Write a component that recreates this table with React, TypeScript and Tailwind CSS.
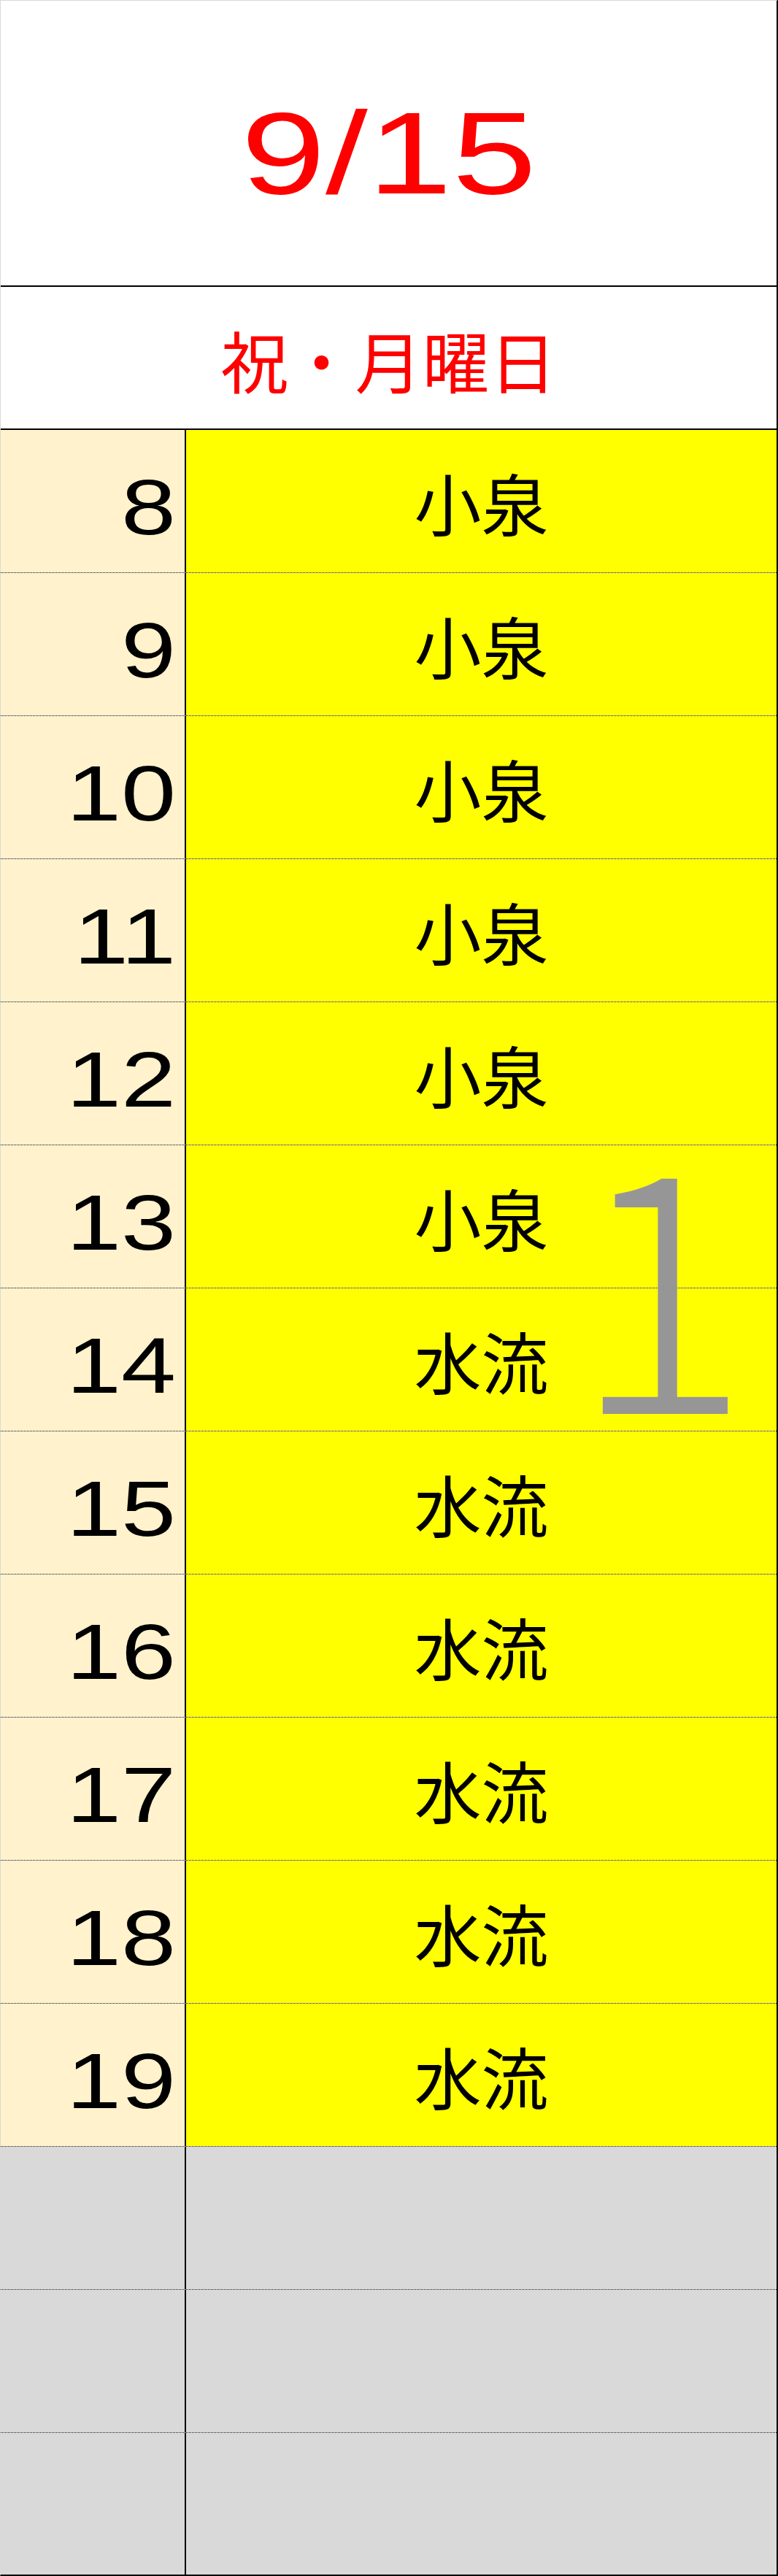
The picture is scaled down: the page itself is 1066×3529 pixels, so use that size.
const HOURS = [
  { hour: 8, name: '小泉' },
  { hour: 9, name: '小泉' },
  { hour: 10, name: '小泉' },
  { hour: 11, name: '小泉' },
  { hour: 12, name: '小泉' },
  { hour: 13, name: '小泉' },
  { hour: 14, name: '水流' },
  { hour: 15, name: '水流' },
  { hour: 16, name: '水流' },
  { hour: 17, name: '水流' },
  { hour: 18, name: '水流' },
  { hour: 19, name: '水流' },
]

const latin = "font-['Liberation_Sans',Arial,sans-serif]"
const cjk = "font-['Noto_Sans_CJK_JP','Noto_Sans_CJK_SC',sans-serif]"

function HourRow({ hour, name }: { hour: number; name: string }) {
  return (
    <div className="flex h-[196px] border-b border-dotted border-black">
      <div className="flex w-[254px] items-center justify-end border-r-2 border-black bg-[#fff2cc] pr-[12px] pt-4">
        <span className={`inline-block origin-right scale-x-[1.25] text-[108px] leading-none text-black ${latin}`}>
          {hour}
        </span>
      </div>
      <div className={`flex flex-1 items-center justify-center bg-[#ffff00] text-[92px] leading-none text-black ${cjk}`}>
        {name}
      </div>
    </div>
  )
}

function EmptyRow({ last }: { last?: boolean }) {
  return (
    <div className={`flex ${last ? 'h-[194px]' : 'h-[196px] border-b border-dotted border-black'}`}>
      <div className="w-[254px] border-r-2 border-black bg-[#d9d9d9]" />
      <div className="flex-1 bg-[#d9d9d9]" />
    </div>
  )
}

export default function App() {
  return (
    <div className="relative w-[1066px] border-t border-l border-t-[#d9d9d9] border-l-[#d9d9d9] border-r-2 border-b-2 border-r-black border-b-black bg-white">
      <div className="flex h-[392px] items-center justify-center border-b-2 border-black pt-[27px]">
        <span className={`inline-block scale-x-[1.3] text-[160px] leading-none text-[#ff0000] ${latin}`}>9/15</span>
      </div>

      <div className={`flex h-[196px] items-center justify-center border-b-2 border-black pt-[4px] text-[92px] leading-none text-[#ff0000] ${cjk}`}>
        祝・月曜日
      </div>

      {HOURS.map(r => (
        <HourRow key={r.hour} hour={r.hour} name={r.name} />
      ))}
      <EmptyRow />
      <EmptyRow />
      <EmptyRow last />

      {/* text box laid over the yellow column */}
      <div className={`pointer-events-none absolute left-[783px] top-[1510px] text-[455px] font-light leading-none text-[#969696] ${cjk}`}>
        1
      </div>
    </div>
  )
}
